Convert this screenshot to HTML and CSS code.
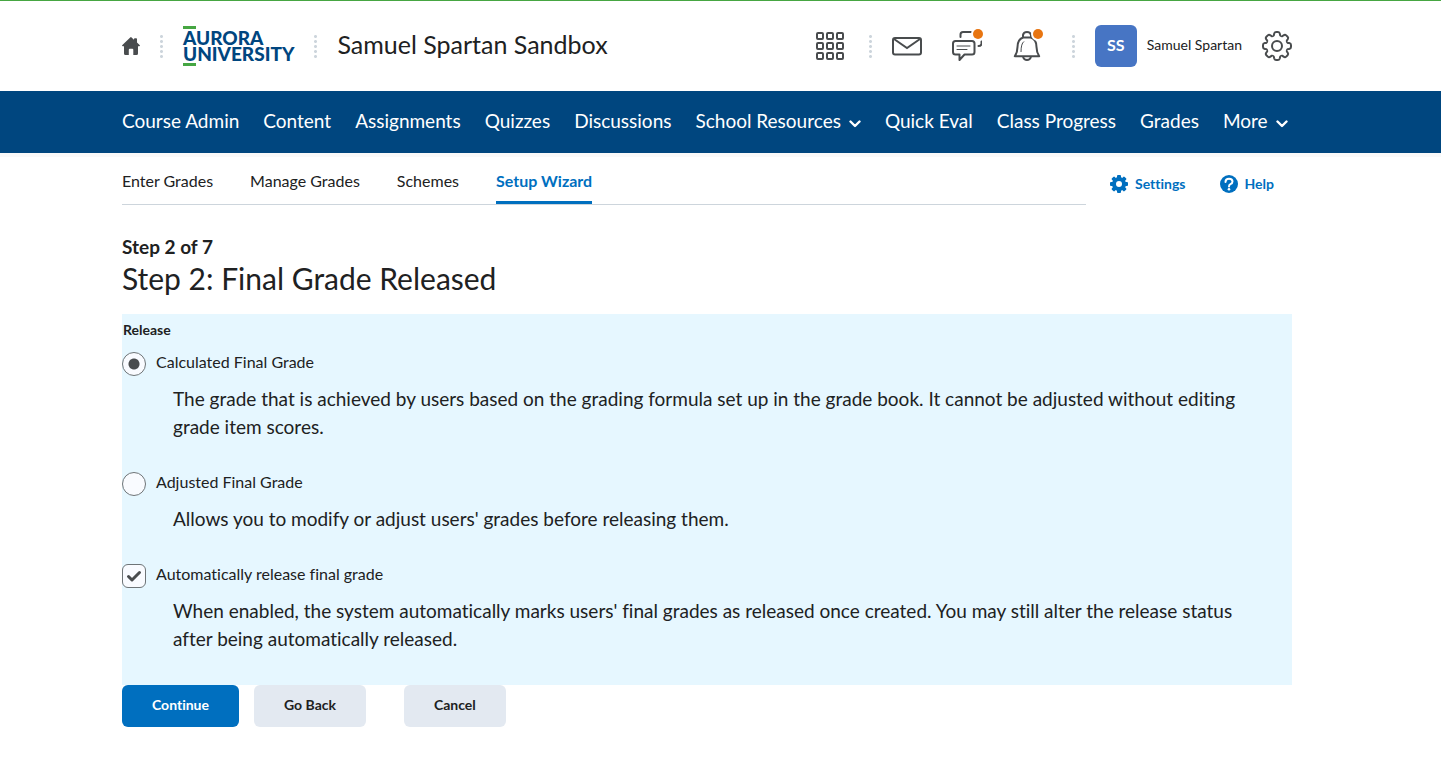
FILE: index.html
```html
<!DOCTYPE html>
<html lang="en">
<head>
<meta charset="utf-8">
<title>Setup Wizard - Samuel Spartan Sandbox</title>
<link rel="stylesheet" href="styles.css">
</head>
<body>
<header class="masthead page">
  <a class="icon-link" href="#" aria-label="My Home">
    <svg class="home" viewBox="0 0 18 18"><path d="M9 0 L12 2.700 V2 q0-.8.8-.8h1.400q.8 0 .8.800 V5.500 L17.600 8 q.8 1-.4 1.300 H16 V16.500 q0 1.500-1.500 1.500 H11.300 V12.800 q0-1-1-1 H7.800 q-1 0-1 1 V18 H3.500 Q2 18 2 16.500 V9.300 H.8 Q-.4 9 .4 8 L8.200.400 Q8.600 0 9 0z" fill="#494c4e"/></svg>
  </a>
  <span class="dots"></span>
  <a class="logo" href="#"><span>AURORA</span><span>UNIVERSITY</span></a>
  <span class="dots"></span>
  <a class="course" href="#">Samuel Spartan Sandbox</a>
  <div class="tools">
    <button class="tool" type="button" aria-label="Select a course">
      <svg viewBox="0 0 30 30" fill="none" stroke="#494c4e" stroke-width="2"><rect x="2" y="2" width="6" height="6" rx="1"/><rect x="12" y="2" width="6" height="6" rx="1"/><rect x="22" y="2" width="6" height="6" rx="1"/><rect x="2" y="12" width="6" height="6" rx="1"/><rect x="12" y="12" width="6" height="6" rx="1"/><rect x="22" y="12" width="6" height="6" rx="1"/><rect x="2" y="22" width="6" height="6" rx="1"/><rect x="12" y="22" width="6" height="6" rx="1"/><rect x="22" y="22" width="6" height="6" rx="1"/></svg>
    </button>
    <span class="dots"></span>
    <div class="alerts">
      <button class="tool" type="button" aria-label="Message alerts">
        <svg viewBox="0 0 30 30" fill="none" stroke="#494c4e" stroke-width="2"><rect x="1" y="7" width="28" height="16.500" rx="2"/><path d="M2 8 L15 17 L28 8"/></svg>
      </button>
      <button class="tool" type="button" aria-label="Subscription alerts">
        <svg viewBox="0 0 30 30" fill="none" stroke="#494c4e" stroke-width="2" stroke-linecap="round"><path d="M3.500 10 H20 q2.500 0 2.500 2.500 V21 q0 2.500-2.500 2.500 H12.500 L7.500 29 V23.500 H3.500 Q1 23.500 1 21 V12.500 Q1 10 3.500 10z" stroke-linejoin="round"/><path d="M8.500 6 V3.500 Q8.500 1 11 1 H19 M29.500 10.500 V13 Q29 15 26.500 15"/><path d="M5 15 H18 M5 18.500 H15" stroke-width="1"/></svg>
        <span class="badge"></span>
      </button>
      <button class="tool" type="button" aria-label="Update alerts">
        <svg viewBox="0 0 30 30" fill="none" stroke="#494c4e" stroke-width="2" stroke-linejoin="round"><path d="M11 6.500 Q5.500 8.500 5.500 16 Q5.500 21 2.800 25.200 H27.200 Q24.500 21 24.500 16 Q24.500 8.500 19 6.500"/><path d="M11 6.500 H19 V4 Q18.500 1 15 1 Q11.500 1 11 4z"/><path d="M11 26 Q12 29 15 29 Q18 29 19 26"/><path d="M12 10.500 Q9 12.500 9 21" stroke-width="1"/></svg>
        <span class="badge"></span>
      </button>
    </div>
    <span class="dots"></span>
    <button class="user" type="button"><span class="avatar">SS</span><span class="name">Samuel Spartan</span></button>
    <button class="tool gear" type="button" aria-label="Admin tools">
      <svg viewBox="-15 -15 30 30" fill="none" stroke="#494c4e" stroke-width="2"><defs><path id="tooth" d="M-4.300 -10.300 C-3 -9.800 -3 -11.400 -2.900 -12.200 Q-2.600 -14 -1 -14 H1 Q2.600 -14 2.900 -12.200 C3 -11.400 3 -9.800 4.300 -10.300"/></defs><use href="#tooth"/><use href="#tooth" transform="rotate(45)"/><use href="#tooth" transform="rotate(90)"/><use href="#tooth" transform="rotate(135)"/><use href="#tooth" transform="rotate(180)"/><use href="#tooth" transform="rotate(225)"/><use href="#tooth" transform="rotate(270)"/><use href="#tooth" transform="rotate(315)"/><circle r="5"/></svg>
    </button>
  </div>
</header>
<nav class="navbar page" aria-label="Course">
  <a href="#">Course Admin</a>
  <a href="#">Content</a>
  <a href="#">Assignments</a>
  <a href="#">Quizzes</a>
  <a href="#">Discussions</a>
  <button type="button">School Resources<svg viewBox="0 0 12 8"><path d="M1.500 1.500 L6 6 L10.500 1.500"/></svg></button>
  <a href="#">Quick Eval</a>
  <a href="#">Class Progress</a>
  <a href="#">Grades</a>
  <button type="button">More<svg viewBox="0 0 12 8"><path d="M1.500 1.500 L6 6 L10.500 1.500"/></svg></button>
</nav>
<div class="subnav page">
  <nav class="tabs" aria-label="Grades">
    <a href="#">Enter Grades</a>
    <a href="#">Manage Grades</a>
    <a href="#">Schemes</a>
    <a class="active" href="#" aria-current="page">Setup Wizard</a>
  </nav>
  <div class="actions">
    <a href="#"><svg viewBox="-9 -9 18 18" fill="#006fbf"><defs><rect id="cog" x="-2" y="-9" width="4" height="18" rx="1"/></defs><circle r="7"/><use href="#cog"/><use href="#cog" transform="rotate(45)"/><use href="#cog" transform="rotate(90)"/><use href="#cog" transform="rotate(135)"/><circle r="3" fill="#fff"/></svg>Settings</a>
    <a href="#"><svg viewBox="0 0 18 18"><circle cx="9" cy="9" r="9" fill="#006fbf"/><path d="M5.500 7 Q5.500 3.700 9 3.700 Q12.500 3.700 12.500 6.600 Q12.500 8.300 10.500 9.200 Q9 9.900 9 11.500" fill="none" stroke="#fff" stroke-width="2" stroke-linecap="round"/><circle cx="9" cy="14.300" r="1.300" fill="#fff"/></svg>Help</a>
  </div>
</div>
<main class="page">
  <h2 class="step">Step 2 of 7</h2>
  <h1>Step 2: Final Grade Released</h1>
  <form>
    <fieldset class="panel">
      <legend>Release</legend>
      <div class="option">
        <label><input type="radio" name="release" checked>Calculated Final Grade</label>
        <p>The grade that is achieved by users based on the grading formula set up in the grade book. It cannot be adjusted without editing grade item scores.</p>
      </div>
      <div class="option">
        <label><input type="radio" name="release">Adjusted Final Grade</label>
        <p>Allows you to modify or adjust users' grades before releasing them.</p>
      </div>
      <div class="option">
        <label><span class="check"><input type="checkbox" checked><svg viewBox="0 0 24 24"><path d="M6.500 12.500 L10 16 L17.500 8.500"/></svg></span>Automatically release final grade</label>
        <p>When enabled, the system automatically marks users' final grades as released once created. You may still alter the release status after being automatically released.</p>
      </div>
    </fieldset>
    <div class="buttons">
      <button class="btn primary" type="submit">Continue</button>
      <button class="btn" type="button">Go Back</button>
      <button class="btn cancel" type="button">Cancel</button>
    </div>
  </form>
</main>
</body>
</html>
```
FILE: styles.css
```css
* { box-sizing: border-box; }
body {
  margin: 0;
  border-top: 1px solid #46a642;
  background: #fff;
  color: #202122;
  font-family: Lato, "Liberation Sans", sans-serif;
  font-size: 19px;
  font-variant-ligatures: none;
  line-height: 28px;
}
a { color: inherit; text-decoration: none; }
button {
  margin: 0;
  padding: 0;
  border: 0;
  background: none;
  color: inherit;
  font: inherit;
  cursor: pointer;
}
svg { display: block; flex: none; }
.page { padding-left: 122px; padding-right: 149px; }

.masthead { display: flex; align-items: center; gap: 20px; height: 90px; }
.home { width: 18px; height: 18px; }
.dots {
  flex: none;
  width: 3px;
  height: 25px;
  background: radial-gradient(circle, #cdd5dc 1px, transparent 2px) 0 0 / 3px 5px;
}
.logo {
  display: flex;
  flex-direction: column;
  align-items: flex-start;
  color: #00467f;
  font-size: 19px;
  font-weight: 900;
  line-height: 16px;
}
.logo::before, .logo::after {
  content: "";
  width: 13px;
  height: 3px;
  background: #46a642;
}
.logo::before { margin-bottom: 1px; }
.logo::after { margin-top: 1px; }
.course { padding-bottom: 5px; font-size: 25px; }
.tools { display: flex; align-items: center; gap: 20px; margin-left: auto; }
.tool { position: relative; width: 30px; height: 30px; }
.tool svg { width: 30px; height: 30px; }
.tools > .tool:first-child { margin-right: 4px; }
.alerts { display: flex; gap: 30px; margin-right: 10px; }
.badge {
  position: absolute;
  top: -2px;
  right: -1px;
  width: 10px;
  height: 10px;
  border-radius: 50%;
  background: #e87511;
  box-shadow: 0 0 0 2px #fff;
}
.user { display: flex; align-items: center; gap: 10px; font-size: 14px; }
.name { padding-bottom: 2px; }
.avatar {
  display: flex;
  align-items: center;
  justify-content: center;
  width: 42px;
  height: 42px;
  padding-bottom: 2px;
  border-radius: 6px;
  background: #4775c4;
  color: #fff;
  font-size: 16px;
  font-weight: 700;
}

.navbar {
  display: flex;
  align-items: center;
  gap: 24px;
  height: 62px;
  padding-bottom: 2px;
  background: #00467f;
  box-shadow: 0 4px 0 #f9f9f9;
  color: #fff;
  white-space: nowrap;
}
.navbar button { display: flex; align-items: center; gap: 8px; }
.navbar svg { width: 12px; height: 8px; margin-top: 6px; }
.navbar path { fill: none; stroke: #fff; stroke-width: 2.4; stroke-linecap: round; stroke-linejoin: round; }

.subnav { display: flex; align-items: flex-start; }
.tabs {
  display: flex;
  flex: 1;
  gap: 37px;
  height: 52px;
  border-bottom: 1px solid #cdd5dc;
  font-size: 16px;
}
.tabs a { padding-top: 14px; }
.tabs .active { border-bottom: 3px solid #006fbf; color: #006fbf; font-weight: 700; }
.actions {
  display: flex;
  gap: 34px;
  padding: 17px 18px 0 24px;
  color: #006fbf;
  font-size: 14px;
  font-weight: 700;
}
.actions a { display: flex; align-items: center; gap: 7px; }
.actions svg { width: 18px; height: 18px; }

h1, h2, p { margin: 0; }
.step { margin-top: 28px; font-size: 19px; font-weight: 700; line-height: 28px; }
h1 { font-size: 30px; font-weight: 400; line-height: 34px; }
form { margin-top: 19px; }
.panel { margin: 0; padding: 6px 0 1px; border: 0; background: #e6f7ff; }
legend {
  float: left;
  width: 100%;
  margin-bottom: 12px;
  padding: 0 1px;
  font-size: 14px;
  font-weight: 700;
  line-height: 20px;
}
.option { clear: both; margin-bottom: 31px; }
.option label { display: flex; gap: 10px; font-size: 16px; line-height: 20px; }
.option p { margin: 9px 30px 0 51px; }
input {
  appearance: none;
  display: block;
  flex: none;
  width: 24px;
  height: 24px;
  margin: 0;
  border: 1px solid #6e7477;
  background: #f9fbff;
}
input[type="radio"] { border-radius: 50%; }
input[type="radio"]:checked { background: radial-gradient(circle, #494c4e 5px, #f9fbff 6px); }
input[type="checkbox"] { border-radius: 6px; }
.check { display: grid; width: 24px; height: 24px; }
.check > * { grid-area: 1 / 1; }
.check path { fill: none; stroke: #494c4e; stroke-width: 3; stroke-linecap: round; stroke-linejoin: round; }
.check svg { z-index: 1; pointer-events: none; }
.buttons { display: flex; gap: 15px; }
.btn {
  height: 42px;
  padding: 0 30px 2px;
  border-radius: 6px;
  background: #e3e9f1;
  font-size: 14px;
  font-weight: 700;
}
.primary { background: #006fbf; color: #fff; }
.cancel { margin-left: 23px; }
```
